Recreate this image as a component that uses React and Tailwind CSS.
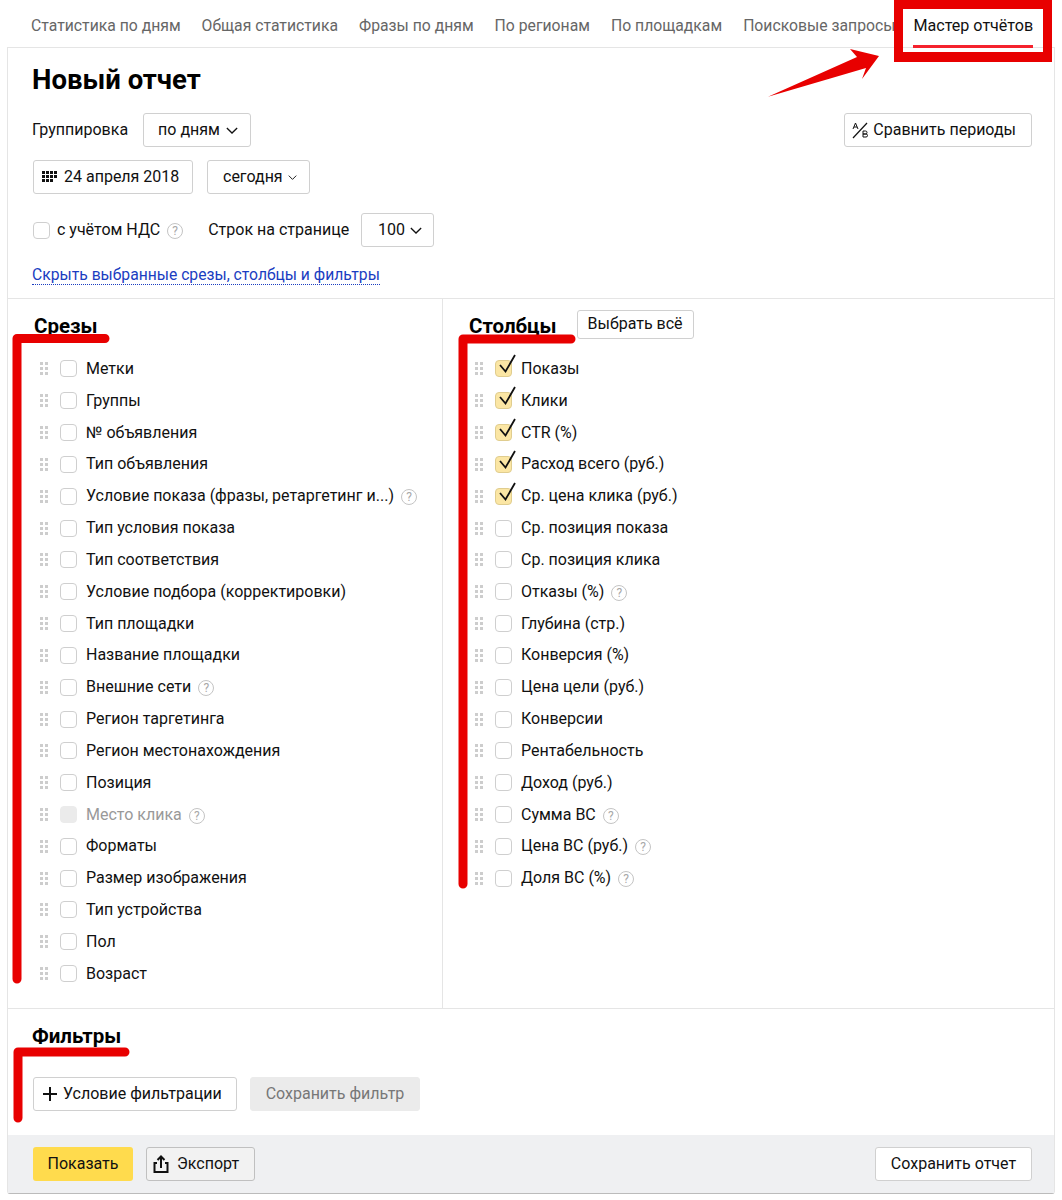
import React from 'react';

const Chevron = ({ w = 12, h = 7 }) => (
  <svg width={w} height={h} viewBox="0 0 14 8" fill="none" stroke="#111" strokeWidth="1.5" className="shrink-0"><path d="M1 1l6 6 6-6" /></svg>
);

const Help = () => (
  <span className="inline-flex items-center justify-center w-[16px] h-[16px] rounded-full border border-[#c4c4c4] text-[12px] leading-none text-[#a8a8a8] shrink-0">?</span>
);

const Grip = () => (
  <svg width="8" height="13" viewBox="0 0 8 13" fill="#cdcdcd" className="shrink-0 ml-[1px]">
    {[0, 5, 10].map((y) => (
      <g key={y}><rect x="0" y={y} width="3" height="3" /><rect x="5" y={y} width="3" height="3" /></g>
    ))}
  </svg>
);

const Box = ({ checked, disabled }) => (
  <span className={`relative block w-[17px] h-[17px] rounded-[4px] border shrink-0 ${checked ? 'bg-[#fbe6a4] border-[#e0cd8f]' : disabled ? 'bg-[#ebebeb] border-[#ebebeb]' : 'bg-white border-[#cfcfcf]'}`}>
    {checked && (
      <svg width="17" height="17" viewBox="0 0 17 17" fill="none" stroke="#111" strokeWidth="1.8" className="absolute left-[-1px] top-[-1px] overflow-visible">
        <path d="M5 5l5.5 6.5L20 -5" />
      </svg>
    )}
  </span>
);

const Row = ({ label, help, checked, disabled }) => (
  <div className="flex items-center h-[31.84px]">
    <Grip />
    <span className="ml-[12px]"><Box checked={checked} disabled={disabled} /></span>
    <span className={`ml-[9px] whitespace-nowrap ${disabled ? 'text-[#999]' : 'text-[#111]'}`}>{label}</span>
    {help ? <span className="ml-[7px]"><Help /></span> : null}
  </div>
);

const Btn = ({ children, className = '', bg = 'bg-white border-[#d0d0d0] text-[#111]', h = 'h-[34px]' }) => (
  <button className={`flex items-center rounded-[3px] border whitespace-nowrap ${h} ${bg} ${className}`}>{children}</button>
);

const slices = [
  ['Метки'], ['Группы'], ['№ объявления'], ['Тип объявления'], ['Условие показа (фразы, ретаргетинг и...)', 1],
  ['Тип условия показа'], ['Тип соответствия'], ['Условие подбора (корректировки)'], ['Тип площадки'], ['Название площадки'],
  ['Внешние сети', 1], ['Регион таргетинга'], ['Регион местонахождения'], ['Позиция'], ['Место клика', 1, 1],
  ['Форматы'], ['Размер изображения'], ['Тип устройства'], ['Пол'], ['Возраст'],
];

const cols = [
  ['Показы', 0, 1], ['Клики', 0, 1], ['CTR (%)', 0, 1], ['Расход всего (руб.)', 0, 1], ['Ср. цена клика (руб.)', 0, 1],
  ['Ср. позиция показа'], ['Ср. позиция клика'], ['Отказы (%)', 1], ['Глубина (стр.)'], ['Конверсия (%)'],
  ['Цена цели (руб.)'], ['Конверсии'], ['Рентабельность'], ['Доход (руб.)'], ['Сумма ВС', 1], ['Цена ВС (руб.)', 1], ['Доля ВС (%)', 1],
];

const tabs = ['Статистика по дням', 'Общая статистика', 'Фразы по дням', 'По регионам', 'По площадкам', 'Поисковые запросы'];

export default function App() {
  return (
    <div className="relative w-[1062px] h-[1200px] bg-white text-[16px] leading-[20px] text-[#111] font-['Roboto','Liberation_Sans',sans-serif] overflow-hidden">
      <nav className="flex h-[47px] pl-[31px] pt-[16px] gap-[21px] text-[#666] text-[15.75px]">
        {tabs.map((t) => <span key={t} className="whitespace-nowrap">{t}</span>)}
        <span className="relative ml-[-3px] text-[#111] whitespace-nowrap text-[16.1px]">
          Мастер отчётов
          <span className="absolute left-0 right-0 top-[29px] h-[3px] bg-[#f5222d]" />
        </span>
      </nav>

      <main className="ml-[7px] w-[1048px] h-[1147px] border border-[#e5e5e5] border-b-[#bbb] rounded-b-[3px] flex flex-col">
        <section className="h-[251px] border-b border-[#e5e5e5] pl-[24px] pr-[22px] flex flex-col">
          <h1 className="mt-[14px] h-[36px] text-[27.5px] leading-[36px] font-bold text-black">Новый отчет</h1>
          <div className="flex items-center mt-[15px] h-[34px]">
            <span>Группировка</span>
            <Btn className="ml-[15px] pl-[14px] pr-[12px] gap-[6px]">по дням <Chevron /></Btn>
            <Btn className="ml-auto pl-[7px] pr-[15px] gap-[3px]">
              <svg width="18" height="18" viewBox="0 0 18 18" fill="none" stroke="#111" strokeWidth="1.2">
                <path d="M1 17L15 2" />
                <path d="M1 8l2.5-6L6 8M2 6h3" strokeWidth="1" />
                <path d="M11 10v6h3a1.5 1.5 0 000-3h-3m0 0h2.5a1.5 1.5 0 000-3H11" strokeWidth="1" />
              </svg>
              Сравнить периоды
            </Btn>
          </div>
          <div className="flex items-center mt-[13px] h-[34px]">
            <Btn className="ml-[1px] w-[160px] pl-[6px] gap-[5px]">
              <svg width="19" height="14" viewBox="0 0 19 14" fill="#111">
                {[0, 4, 8].flatMap((y) => [0, 4, 8, 12].map((x) => (y === 8 && x === 12) ? null : (
                  <rect key={`${x}-${y}`} x={x + 2} y={y + 1} width="3" height="3" />
                )))}
              </svg>
              24 апреля 2018
            </Btn>
            <Btn className="ml-[14px] pl-[15px] pr-[12px] gap-[5px]">сегодня <Chevron w={9} h={5} /></Btn>
          </div>
          <div className="flex items-center mt-[19px] h-[34px]">
            <span className="ml-[1px]"><Box /></span>
            <span className="ml-[7px]">с учётом НДС</span>
            <span className="ml-[7px]"><Help /></span>
            <span className="ml-[25px]">Строк на странице</span>
            <Btn className="ml-[12px] pl-[16px] pr-[11px] gap-[5px]">100 <Chevron /></Btn>
          </div>
          <div className="mt-[18px] text-[15.7px]">
            <a className="text-[#1a3dc1] border-b border-dotted border-[#1a3dc1]">Скрыть выбранные срезы, столбцы и фильтры</a>
          </div>
        </section>

        <section className="h-[710px] flex border-b border-[#e5e5e5]">
          <div className="w-[435px] border-r border-[#e5e5e5] pl-[31px] pt-[15px]">
            <h2 className="ml-[-5px] h-[24px] text-[20.5px] leading-[24px] font-bold text-black">Срезы</h2>
            <div className="mt-[15px]">
              {slices.map(([l, h, d]) => <Row key={l} label={l} help={h} disabled={d} />)}
            </div>
          </div>
          <div className="flex-1 pl-[31px] pt-[11px]">
            <div className="flex items-center h-[28px] gap-[20px] ml-[-5px]">
              <h2 className="text-[20.5px] leading-[24px] font-bold text-black mt-[4px]">Столбцы</h2>
              <Btn h="h-[29px]" className="px-[10px]">Выбрать всё</Btn>
            </div>
            <div className="mt-[15px]">
              {cols.map(([l, h, c]) => <Row key={l} label={l} help={h} checked={c} />)}
            </div>
          </div>
        </section>

        <section className="h-[126px] pl-[24px] pt-[15px]">
          <h2 className="h-[24px] text-[20.5px] leading-[24px] font-bold text-black">Фильтры</h2>
          <div className="flex mt-[29px] gap-[13px] ml-[1px]">
            <Btn className="w-[204px] pl-[9px] gap-[6px]">
              <svg width="14" height="14" viewBox="0 0 14 14" stroke="#111" strokeWidth="2"><path d="M7 0v14M0 7h14" /></svg>
              Условие фильтрации
            </Btn>
            <Btn className="w-[170px] justify-center" bg="bg-[#ebebeb] border-[#ebebeb] text-[#777]">Сохранить фильтр</Btn>
          </div>
        </section>

        <footer className="flex-1 bg-[#eff0f2] flex items-center pl-[25px] pr-[22px] gap-[13px]">
          <button className="h-[34px] w-[100px] rounded-[3px] bg-[#ffdb4d] text-[#111]">Показать</button>
          <Btn className="w-[109px] pl-[6px] gap-[8px]" bg="bg-[#f2f2f2] border-[#c0c0c0] text-[#111]">
            <svg width="16" height="18" viewBox="0 0 16 18" fill="none" stroke="#111" strokeWidth="2">
              <path d="M4 8H1.5v9h13V8H12M8 13V2M4.5 5L8 1.5 11.5 5" />
            </svg>
            Экспорт
          </Btn>
          <Btn className="ml-auto w-[157px] justify-center">Сохранить отчет</Btn>
        </footer>
      </main>

      <svg className="absolute left-0 top-0 pointer-events-none" width="1062" height="1200" viewBox="0 0 1062 1200" fill="none">
        <path d="M894 0H1052V62H894ZM903 9V52H1043V9Z" fill="#e80000" fillRule="evenodd" />
        <path d="M768 96.7L857 57 850 49 879 56 862 79 866 68Z" fill="#e80000" />
        <g stroke="#e80000" strokeWidth="9" strokeLinecap="round" strokeLinejoin="round">
          <path d="M105 338.5H17V979" />
          <path d="M571 339H463V884" />
          <path d="M125 1052H18V1118" />
        </g>
      </svg>
    </div>
  );
}
